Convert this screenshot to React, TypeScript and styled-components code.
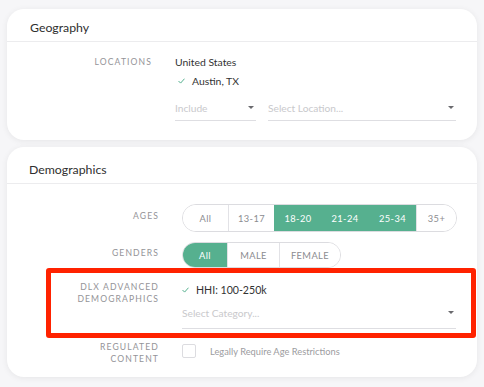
import * as React from 'react';
import styled, { createGlobalStyle } from 'styled-components';

const GlobalStyle = createGlobalStyle`
    html, body {
        margin: 0;
        padding: 0;
        background: #f6f6f8;
        font-family: Lato, "Noto Sans", sans-serif;
    }
`;

const Page = styled.div`
    display: flex;
    flex-direction: column;
    gap: 7px;
    padding: 9px 7px;
    width: 470px;
`;

const Card = styled.section`
    background: #fff;
    border-radius: 17px;
    box-shadow: 0 1px 6px rgba(0, 0, 0, 0.07);
`;

const CardHeader = styled.div<{ tall?: boolean }>`
    display: flex;
    align-items: center;
    height: ${({ tall }) => (tall ? '37px' : '33px')};
    padding-left: ${({ tall }) => (tall ? '22px' : '23px')};
    padding-top: ${({ tall }) => (tall ? '9px' : '4px')};
    border-bottom: 1px solid #ececee;
    font-size: 12.3px;
    color: #2f2f2f;
    box-sizing: border-box;
`;

const CardBody = styled.div<{ top: number; bottom: number }>`
    display: flex;
    flex-direction: column;
    padding: ${({ top, bottom }) => `${top}px 21px ${bottom}px 0`};
`;

const Row = styled.div<{ labelWidth: number }>`
    position: relative;
    display: grid;
    grid-template-columns: ${({ labelWidth }) => `${labelWidth}px 1fr`};
    column-gap: 23px;
    align-items: start;
`;

const HighlightRow = styled(Row)`
    padding: 13px 0 9px;
    margin-bottom: 3px;
    &::after {
        content: '';
        position: absolute;
        left: 39px;
        right: -20px;
        top: 0;
        bottom: 0;
        border: 5px solid #ff2200;
        border-radius: 3px;
        pointer-events: none;
    }
`;

const Label = styled.div<{ center?: boolean }>`
    text-align: right;
    font-size: 8.6px;
    line-height: 12px;
    letter-spacing: 1.1px;
    font-weight: 400;
    color: #949498;
    text-transform: uppercase;
    align-self: ${({ center }) => (center ? 'center' : 'start')};
`;

const Values = styled.div`
    display: flex;
    flex-direction: column;
`;

const ValueText = styled.div`
    font-size: 10.4px;
    line-height: 14px;
    color: #333;
`;

const CheckedItem = styled.div<{ big?: boolean }>`
    display: flex;
    align-items: center;
    gap: 7px;
    padding-left: ${({ big }) => (big ? '0' : '3px')};
    margin-top: ${({ big }) => (big ? '2px' : '5px')};
    font-size: ${({ big }) => (big ? '10.6px' : '10.4px')};
    line-height: 14px;
    color: #333;
`;

const SelectRow = styled.div<{ top: number }>`
    display: flex;
    gap: 12px;
    margin-top: ${({ top }) => top}px;
`;

const Select = styled.div<{ width?: number; h: number }>`
    display: flex;
    align-items: center;
    justify-content: space-between;
    height: ${({ h }) => h}px;
    padding-right: 2px;
    border-bottom: 1px solid #dedee2;
    font-size: 10.2px;
    color: #c9c9cc;
    flex: ${({ width }) => (width ? `0 0 ${width}px` : '1')};
    box-sizing: border-box;
`;

const Caret = styled.span`
    width: 0;
    height: 0;
    border-left: 3.5px solid transparent;
    border-right: 3.5px solid transparent;
    border-top: 3.5px solid #6a6a6e;
`;

const Segmented = styled.div<{ h: number }>`
    display: flex;
    height: ${({ h }) => h}px;
    border: 1px solid #dcdce0;
    border-radius: ${({ h }) => h / 2}px;
    overflow: hidden;
    box-sizing: border-box;
    align-self: start;
    width: max-content;
`;

const Segment = styled.div<{ active?: boolean; w: number }>`
    display: flex;
    align-items: center;
    justify-content: center;
    box-sizing: border-box;
    width: ${({ w }) => w}px;
    font-size: 9.3px;
    letter-spacing: 0.4px;
    color: ${({ active }) => (active ? '#fff' : '#8c8c90')};
    background: ${({ active }) => (active ? '#56b08f' : '#fff')};
    border-left: 1px solid
        ${({ active }) => (active ? '#56b08f' : '#e2e2e6')};
    &:first-child {
        border-left: none;
    }
`;

const Checkbox = styled.span`
    width: 12px;
    height: 12px;
    border: 1px solid #dcdce0;
    border-radius: 2px;
    flex: none;
`;

const CheckboxRow = styled.div`
    display: flex;
    align-items: center;
    gap: 14px;
    margin-top: 3px;
    font-size: 9.3px;
    color: #9c9ca0;
`;

const Check = () => (
    <svg width="7" height="6" viewBox="0 0 7 6">
        <path
            d="M0.5 3 L2.6 5.1 L6.5 0.7"
            fill="none"
            stroke="#56b08f"
            strokeWidth="1"
        />
    </svg>
);

const ages: [string, number][] = [
    ['All', 45],
    ['13-17', 46],
    ['18-20', 47],
    ['21-24', 47],
    ['25-34', 48],
    ['35+', 40],
];
const activeAges = ['18-20', '21-24', '25-34'];

const genders: [string, number][] = [
    ['All', 44],
    ['MALE', 52],
    ['FEMALE', 61],
];

export default function App() {
    return (
        <Page>
            <GlobalStyle />
            <Card>
                <CardHeader>Geography</CardHeader>
                <CardBody top={13} bottom={19}>
                    <Row labelWidth={145}>
                        <Label style={{ marginTop: 1 }}>Locations</Label>
                        <Values>
                            <ValueText>United States</ValueText>
                            <CheckedItem>
                                <Check />
                                Austin, TX
                            </CheckedItem>
                            <SelectRow top={7}>
                                <Select width={81} h={26}>
                                    Include
                                    <Caret />
                                </Select>
                                <Select h={26}>
                                    Select Location...
                                    <Caret />
                                </Select>
                            </SelectRow>
                        </Values>
                    </Row>
                </CardBody>
            </Card>
            <Card>
                <CardHeader tall>Demographics</CardHeader>
                <CardBody top={20} bottom={12}>
                    <Row labelWidth={152}>
                        <Label center style={{ marginTop: -4 }}>
                            Ages
                        </Label>
                        <Segmented h={28}>
                            {ages.map(([a, w]) => (
                                <Segment
                                    key={a}
                                    w={w}
                                    active={activeAges.includes(a)}
                                >
                                    {a}
                                </Segment>
                            ))}
                        </Segmented>
                    </Row>
                    <Row labelWidth={152} style={{ marginTop: 10 }}>
                        <Label center style={{ marginTop: -4 }}>
                            Genders
                        </Label>
                        <Segmented h={26}>
                            {genders.map(([g, w]) => (
                                <Segment key={g} w={w} active={g === 'All'}>
                                    {g}
                                </Segment>
                            ))}
                        </Segmented>
                    </Row>
                    <HighlightRow labelWidth={152}>
                        <Label>
                            DLX Advanced
                            <br />
                            Demographics
                        </Label>
                        <Values>
                            <CheckedItem big>
                                <Check />
                                HHI: 100-250k
                            </CheckedItem>
                            <SelectRow top={0}>
                                <Select h={32}>
                                    Select Category...
                                    <Caret />
                                </Select>
                            </SelectRow>
                        </Values>
                    </HighlightRow>
                    <Row labelWidth={152}>
                        <Label>
                            Regulated
                            <br />
                            Content
                        </Label>
                        <CheckboxRow>
                            <Checkbox />
                            Legally Require Age Restrictions
                        </CheckboxRow>
                    </Row>
                </CardBody>
            </Card>
        </Page>
    );
}
